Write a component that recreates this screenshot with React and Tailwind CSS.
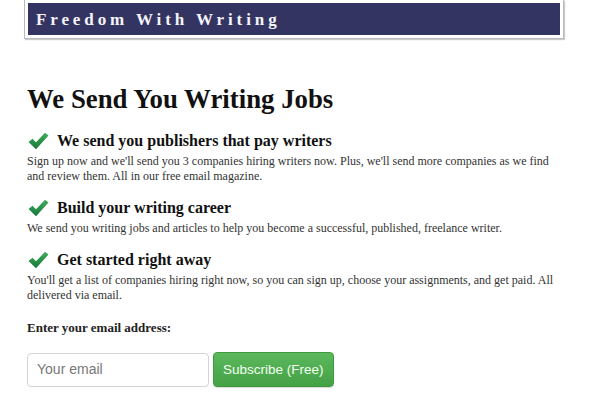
const items = [
  {
    title: 'We send you publishers that pay writers',
    body: "Sign up now and we'll send you 3 companies hiring writers now. Plus, we'll send more companies as we find and review them. All in our free email magazine.",
  },
  {
    title: 'Build your writing career',
    body: 'We send you writing jobs and articles to help you become a successful, published, freelance writer.',
  },
  {
    title: 'Get started right away',
    body: "You'll get a list of companies hiring right now, so you can sign up, choose your assignments, and get paid. All delivered via email.",
  },
]

function Check() {
  return (
    <svg width="21" height="18" viewBox="0 0 21 18" className="shrink-0">
      <defs>
        <linearGradient id="ck" x1="0" y1="0" x2="0" y2="1">
          <stop offset="0" stopColor="#3fae5a" />
          <stop offset="1" stopColor="#17763a" />
        </linearGradient>
      </defs>
      <path d="M0.5 10 L4.5 6.8 L8 10.3 L17 0.8 L20.5 3.6 L8 17.2 Z" fill="url(#ck)" />
    </svg>
  )
}

export default function App() {
  return (
    <div className="w-[600px] h-[410px] bg-white overflow-hidden font-['Liberation_Serif',serif] text-[#222]">
      <div className="ml-6 mr-9 border border-[#b8b8c0] border-t-0 px-[3px] pb-[3px] pt-[3px] shadow-[1px_1px_1px_#ccc]">
        <div className="bg-[#343463] h-8 flex items-center pl-2">
          <span className="text-[#f4f4f8] font-bold text-[17px] tracking-[3.9px] leading-none">Freedom With Writing</span>
        </div>
      </div>

      <div className="pl-[27px] pr-[33px] pt-[47px]">
        <h1 className="text-[26.8px] font-bold leading-none text-[#111]">We Send You Writing Jobs</h1>

        <div className="mt-[17px] flex flex-col gap-[13px]">
          {items.map((it) => (
            <div key={it.title}>
              <div className="flex items-center gap-2 pl-px">
                <Check />
                <h2 className="text-[16px] font-bold leading-[22px] text-[#111]">{it.title}</h2>
              </div>
              <p className="text-[12px] leading-[15px] text-[#333] mt-[2px]">{it.body}</p>
            </div>
          ))}
        </div>

        <p className="mt-[15px] text-[13px] font-bold text-[#222]">Enter your email address:</p>

        <div className="mt-[15px] flex items-center gap-1 font-['Liberation_Sans',sans-serif]">
          <div className="w-[182px] h-[34px] border border-[#d4d4d4] rounded-[4px] flex items-center px-[9px] text-[14px] text-[#777]">
            Your email
          </div>
          <button className="h-[35px] px-[9px] rounded-[4px] border border-[#3f9a3f] bg-gradient-to-b from-[#5cb85c] to-[#45a145] text-[#f2fff2] text-[13.5px] shadow-[0_1px_1px_rgba(0,0,0,0.15)]">
            Subscribe (Free)
          </button>
        </div>
      </div>
    </div>
  )
}
